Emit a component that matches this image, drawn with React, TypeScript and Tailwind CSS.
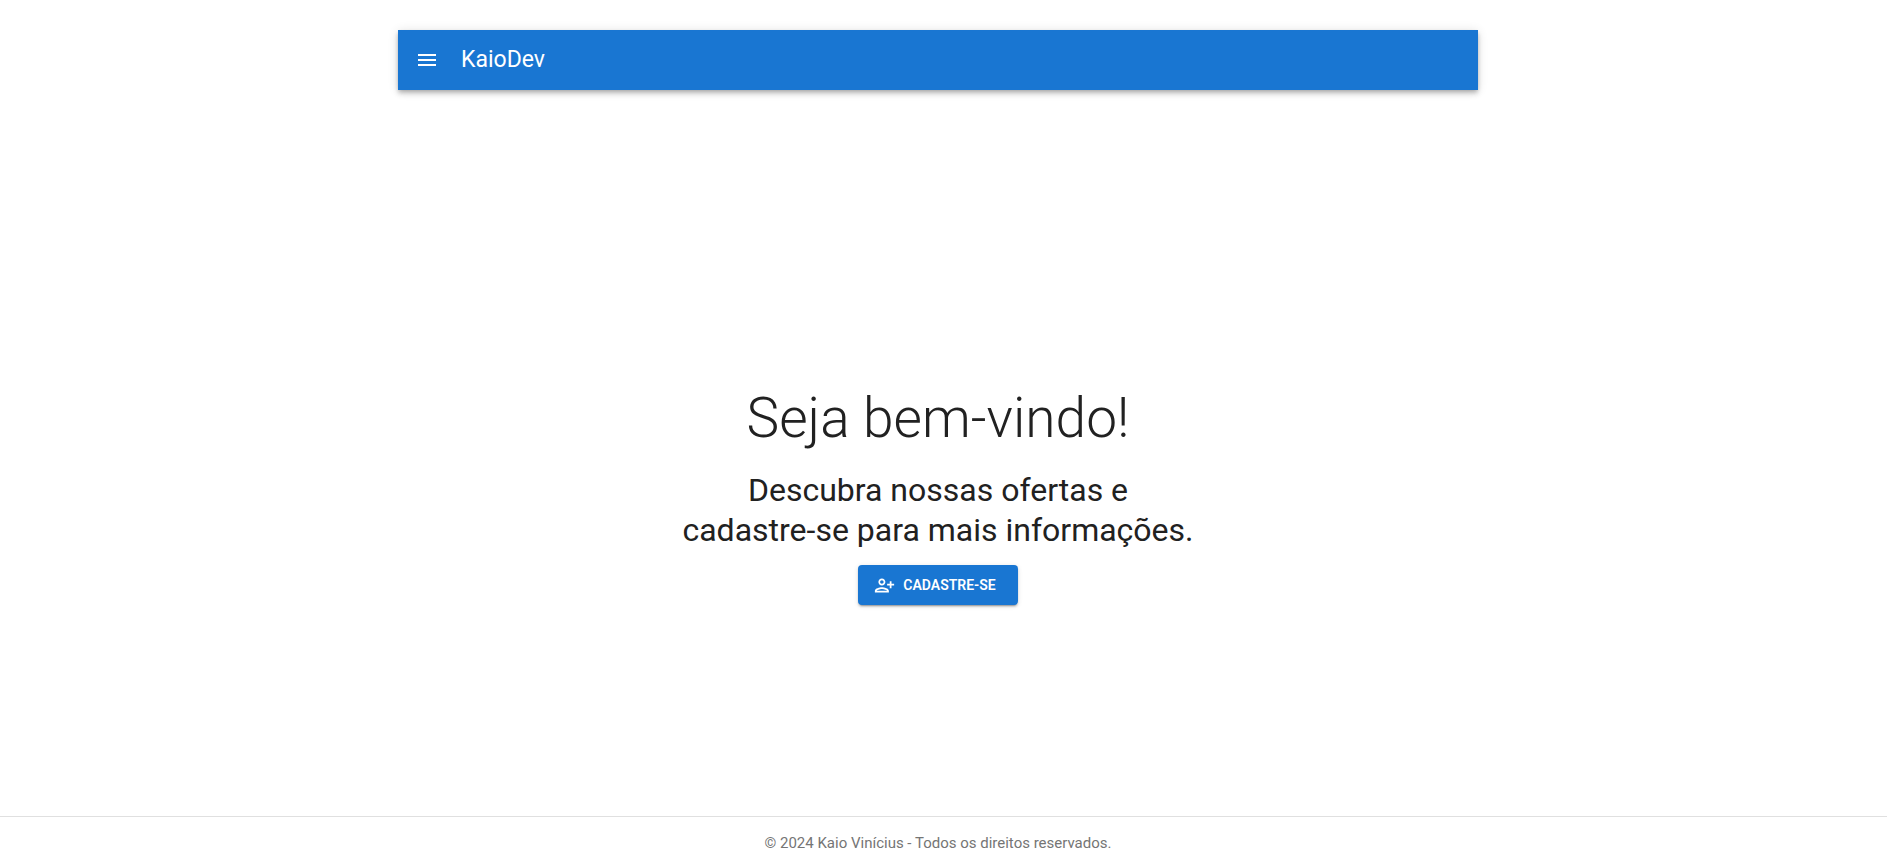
function MenuIcon() {
  return (
    <svg viewBox="0 0 24 24" className="size-6 fill-current" aria-hidden="true">
      <path d="M3 18h18v-2H3v2zm0-5h18v-2H3v2zm0-7v2h18V6H3z" />
    </svg>
  );
}

function PersonAddIcon() {
  return (
    <svg viewBox="0 0 24 24" className="size-[21px] fill-current" aria-hidden="true">
      <path d="M13 8c0-2.210-1.790-4-4-4S5 5.790 5 8s1.790 4 4 4 4-1.790 4-4zm-2 0c0 1.100-.9 2-2 2s-2-.9-2-2 .9-2 2-2 2 .9 2 2zM1 18v2h16v-2c0-2.660-5.330-4-8-4s-8 1.340-8 4zm2 0c.2-.71 3.300-2 6-2 2.690 0 5.770 1.280 6 2H3zM20 15v-3h3v-2h-3V7h-2v3h-3v2h3v3h2z" />
    </svg>
  );
}

export default function App() {
  return (
    <div className="flex min-h-screen flex-col bg-white font-[Roboto,sans-serif] text-[#212121]">
      <div className="flex grow flex-col pr-[11px]">
        <header className="mx-auto mt-[30px] flex h-15 w-full max-w-[1080px] items-center bg-[#1976d2] px-[17px] text-white shadow-[0_2px_4px_-1px_rgba(0,0,0,0.2),0_4px_5px_rgba(0,0,0,0.14),0_1px_10px_rgba(0,0,0,0.12)]">
          <button type="button" aria-label="Menu" className="flex cursor-pointer">
            <MenuIcon />
          </button>
          <span className="ml-[22px] text-[23px] leading-8">KaioDev</span>
        </header>

        <main className="flex grow flex-col items-center px-4 pt-[292px] text-center">
          <h1 className="text-[55px] leading-[72px] font-light">Seja bem-vindo!</h1>
          <p className="mt-4 text-[32px] leading-10">
            Descubra nossas ofertas e
            <br />
            cadastre-se para mais informações.
          </p>
          <a
            href="#cadastro"
            className="mt-[15px] flex h-10 items-center gap-2 rounded bg-[#1976d2] pr-[22px] pl-4 text-sm font-semibold text-white uppercase shadow-[0_3px_1px_-2px_rgba(0,0,0,0.2),0_2px_2px_rgba(0,0,0,0.14),0_1px_5px_rgba(0,0,0,0.12)]"
          >
            <PersonAddIcon />
            Cadastre-se
          </a>
        </main>
      </div>

      <footer className="flex h-12 items-center justify-center border-t border-[#e0e0e0] pt-1.5 pr-[11px] text-[15px] text-[#757575]">
        © 2024 Kaio Vinícius - Todos os direitos reservados.
      </footer>
    </div>
  );
}
